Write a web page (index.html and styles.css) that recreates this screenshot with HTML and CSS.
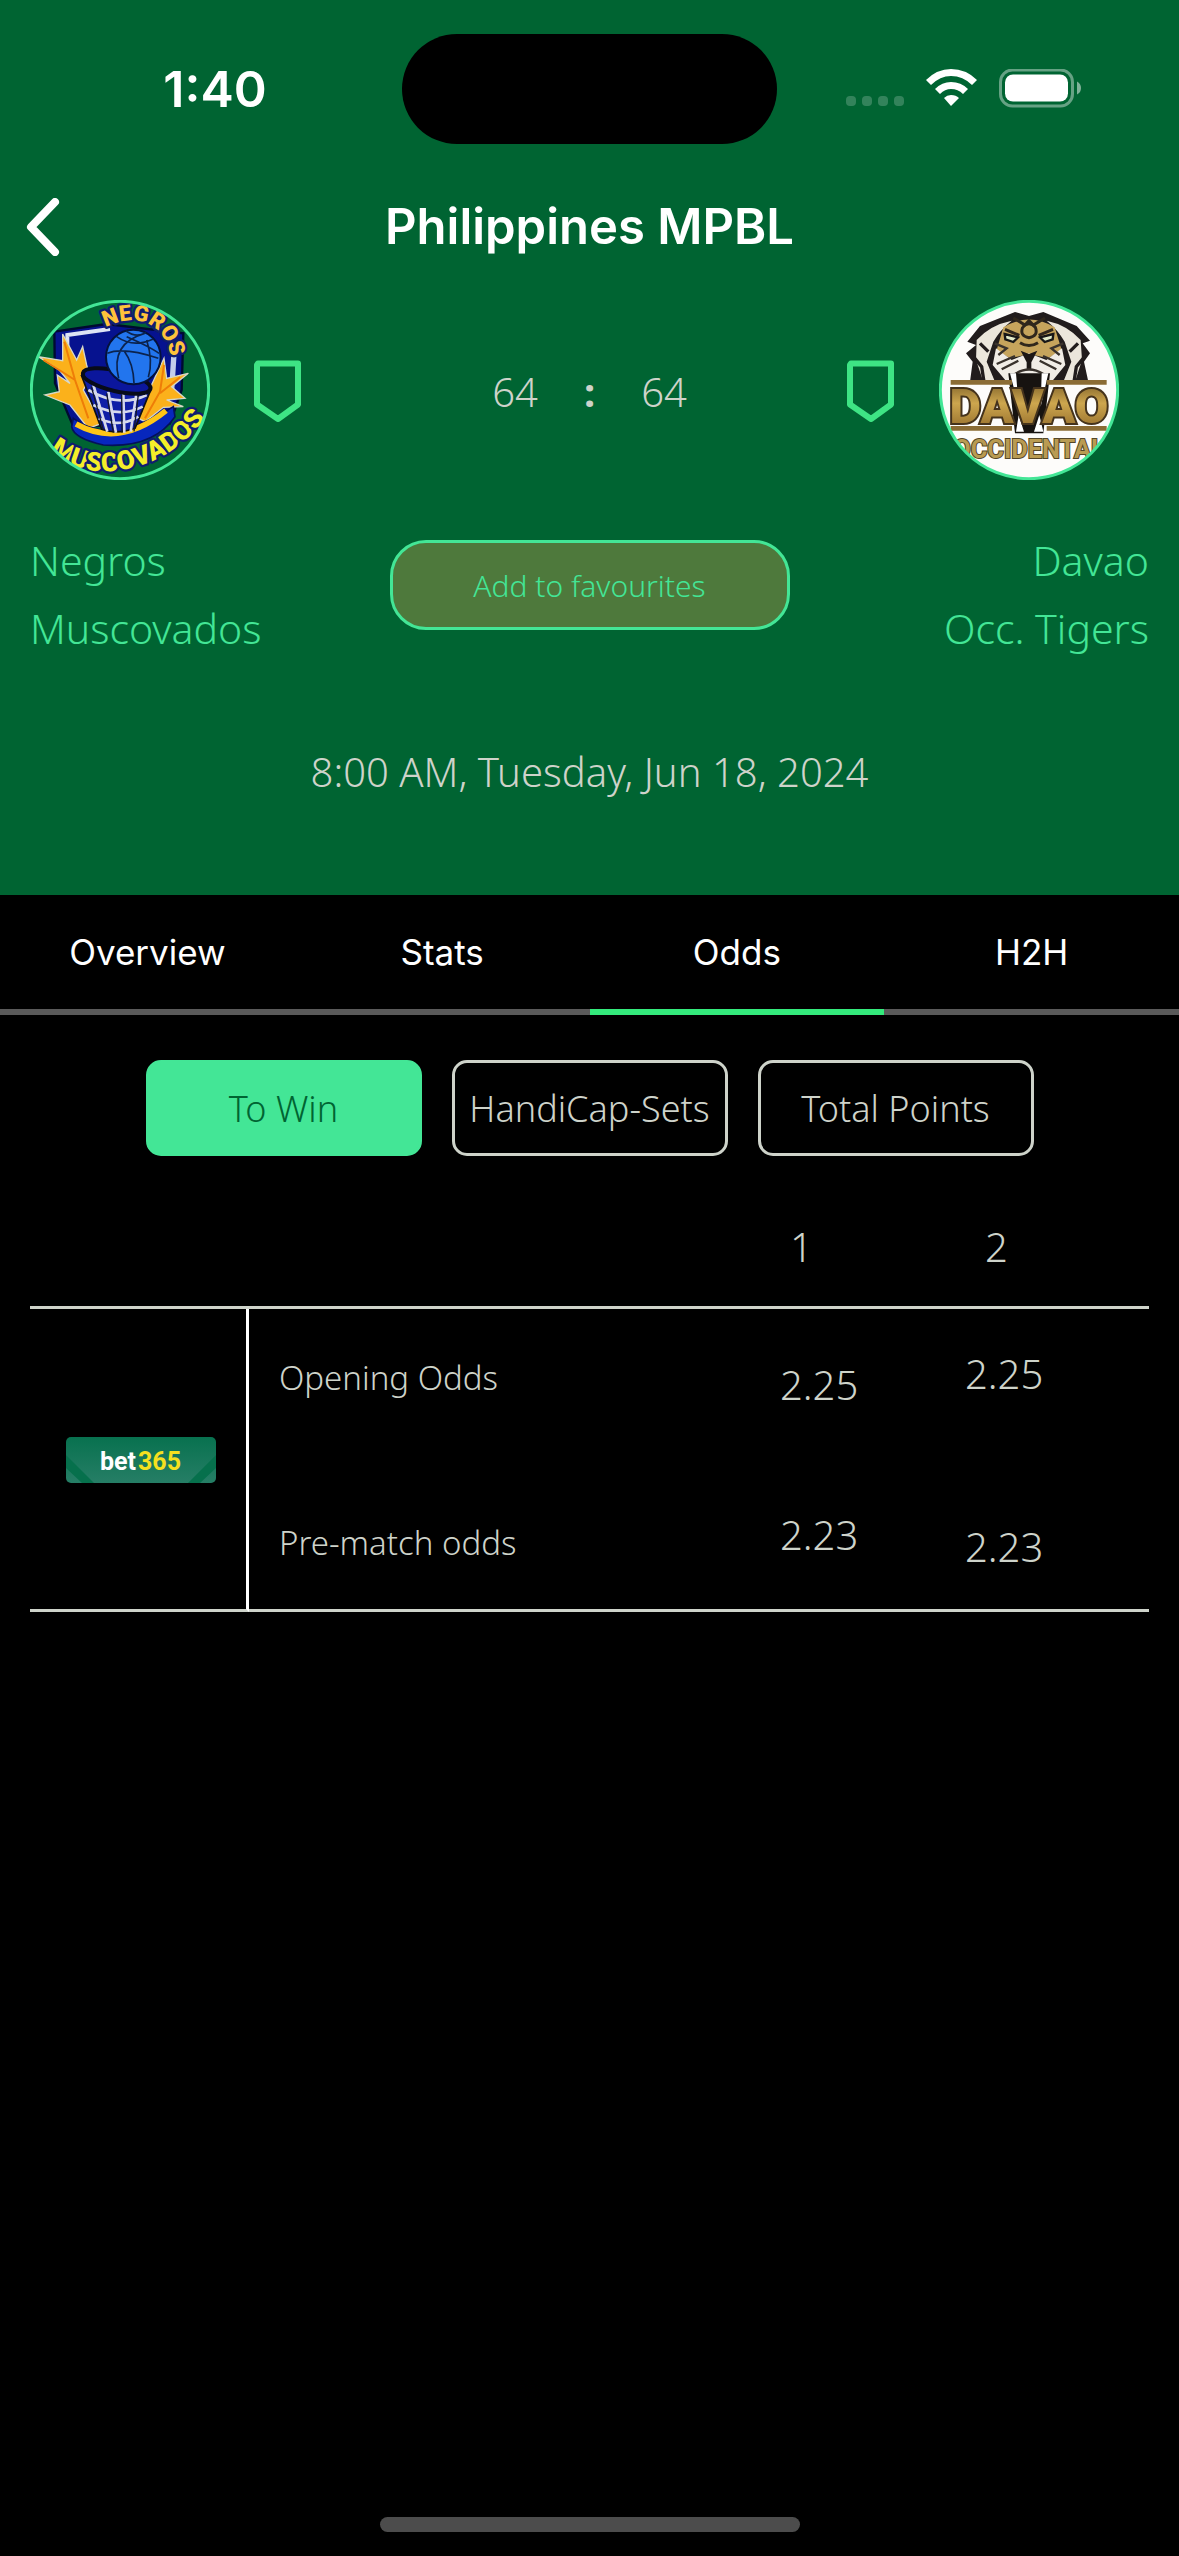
FILE: index.html
```html
<!DOCTYPE html>
<html lang="en">
<head>
<meta charset="utf-8">
<meta name="viewport" content="width=device-width, initial-scale=1">
<title>Philippines MPBL</title>
<link rel="stylesheet" href="styles.css">
</head>
<body>
<div class="app">
  <header class="hero">
    <div class="status">
      <time class="clock">1:40</time>
      <div class="island"></div>
      <svg class="status-icons" viewBox="0 0 236 40" aria-hidden="true">
        <g fill="#fff" opacity=".2"><rect x="0" y="27" width="10" height="10" rx="4"/><rect x="16" y="27" width="10" height="10" rx="4"/><rect x="32" y="27" width="10" height="10" rx="4"/><rect x="48" y="27" width="10" height="10" rx="4"/></g>
        <path fill="#fff" d="M80 11Q91 0 105 0Q120 0 131 11L126 16Q117 7 105 7Q94 7 85 16ZM89 20Q96 13 105 13Q115 13 122 20L117 25Q112 20 105 20Q99 20 94 25ZM98 29Q101 26 105 26Q110 26 113 29L105 37Z"/>
        <rect x="154.500" y="1" width="72" height="36" rx="12" fill="none" stroke="#fff" stroke-width="3" opacity=".4"/>
        <rect x="159" y="5.500" width="63" height="27" rx="8" fill="#fff"/>
        <path d="M231 12.500q4 2 4 6.500t-4 6.500z" fill="#fff" opacity=".5"/>
      </svg>
    </div>
    <nav class="titlebar">
      <button class="back" type="button" aria-label="Back"><svg viewBox="0 0 34 58"><path d="M29 4L5 29L29 54" fill="none" stroke="#fff" stroke-width="8" stroke-linecap="round" stroke-linejoin="round"/></svg></button>
      <h1>Philippines MPBL</h1>
    </nav>
    <section class="match">
      <div class="side">
        <svg class="crest" viewBox="30 30 540 540" role="img" aria-label="Negros Muscovados">
          <defs>
            <clipPath id="round"><circle cx="300" cy="300" r="266"/></clipPath>
            <path id="topArc" d="M257 112Q350 66 412 120Q452 155 462 250"/>
            <path id="bottomArc" d="M88 484Q190 570 335 534Q470 500 560 380"/>
          </defs>
          <g clip-path="url(#round)">
            <path d="M103 125L260 102L490 130L485 300L450 400L160 410L105 280Z" fill="#06128f" stroke="#000a30" stroke-width="7"/>
            <path d="M142 190V135L270 117" fill="none" stroke="#dde3f5" stroke-width="12"/>
            <path d="M462 190L455 300" stroke="#c3cdea" stroke-width="16"/>
            <g fill="#fbb11b" stroke="#d8d8c8" stroke-width="4">
              <path d="M128 132L170 210L188 170L200 225L210 262L190 300L245 400L205 415L150 345L75 315L118 305L112 255L150 280L118 240L55 200L128 212Z"/>
              <path d="M432 205L440 265L505 250L455 290L495 325L440 330L490 350L430 352L375 395L355 385L385 305Z"/>
            </g>
            <path d="M133 155L165 270L205 385M70 210L165 270M432 225L420 305L375 385M480 262L420 310" fill="none" stroke="#ee7d08" stroke-width="6"/>
            <path d="M160 385Q270 470 460 350L465 380Q400 475 250 465Q160 445 155 410Z" fill="#0727bd" stroke="#04105a" stroke-width="5"/>
            <path d="M168 402Q300 475 438 362" fill="none" stroke="#ffc616" stroke-width="17"/>
            <path d="M185 258L245 418Q290 435 345 415L392 300Z" fill="#101fa7" stroke="#111" stroke-width="5"/>
            <path d="M205 300Q300 355 380 315M220 345Q300 385 368 350M236 385Q300 415 355 380M220 285L262 425M265 305L288 428M310 312L313 428M350 305L332 425" fill="none" stroke="#d5d8eb" stroke-width="8"/>
            <path d="M214 290L250 420M260 310L280 428M305 315L306 428M356 305L342 424" fill="none" stroke="#15182a" stroke-width="4"/>
            <ellipse cx="290" cy="273" rx="104" ry="31" transform="rotate(13 290 273)" fill="#0b169c" stroke="#070b1a" stroke-width="12"/>
            <circle cx="340" cy="201" r="82" fill="#2275ee" stroke="#04113c" stroke-width="6"/>
            <path d="M262 190Q310 170 415 205M290 140Q340 175 400 147M318 123Q350 145 378 127M374 130Q270 160 296 265M313 184Q340 220 342 280M380 150Q400 215 385 262M320 140Q390 170 417 190" fill="none" stroke="#0b234e" stroke-width="5"/>
            <g class="crest-text" font-size="66"><text fill="#ffc33a"><textPath href="#topArc">NEGROS</textPath></text></g>
            <g class="crest-text" font-size="79"><text fill="#f4ee29"><textPath href="#bottomArc">MUSCOVADOS</textPath></text></g>
          </g>
          <circle cx="300" cy="300" r="266" fill="none" stroke="#43e696" stroke-width="9"/>
        </svg>
        <svg class="shield" viewBox="0 -2 50 64" aria-hidden="true"><path d="M5 3.500H45V44.500L25 59L4 44.500V5Z" fill="none" stroke="#3ee484" stroke-width="6" stroke-linejoin="round"/></svg>
      </div>
      <div class="score"><span>64</span><b>:</b><span>64</span></div>
      <div class="side side-away">
        <svg class="shield" viewBox="0 -2 50 64" aria-hidden="true"><path d="M5 3.500H45V44.500L25 59L4 44.500V5Z" fill="none" stroke="#3ee484" stroke-width="6" stroke-linejoin="round"/></svg>
        <svg class="crest" viewBox="327 30 540 540" role="img" aria-label="Davao Occidental Tigers">
          <defs>
            <clipPath id="roundAway"><circle cx="597" cy="300" r="266"/></clipPath>
            <linearGradient id="gold" x1="0" y1="0" x2="0" y2="1"><stop offset="0" stop-color="#705523"/><stop offset=".45" stop-color="#cda64e"/><stop offset="1" stop-color="#8b6426"/></linearGradient>
          </defs>
          <g clip-path="url(#roundAway)">
            <rect x="327" y="30" width="540" height="540" fill="#fdfcfa"/>
            <path d="M412 155L450 108L555 66L597 78L640 66L740 108L780 152L758 160L780 190L762 215L775 275H420L428 215L408 190L438 165Z" fill="#211c1c"/>
            <path d="M440 150Q480 105 545 92Q510 120 490 155L470 215L495 275H460L438 210ZM752 150Q712 105 650 92Q684 120 704 155L724 215L700 275H735L756 210Z" fill="#ebe6db"/>
            <path d="M430 200L455 230L462 275M764 200L739 230L732 275M450 160L475 185M744 160L719 185" fill="none" stroke="#211c1c" stroke-width="10"/>
            <path d="M520 112Q597 65 674 112L695 180L655 205L597 192L539 205L500 180Z" fill="#c6a45c"/>
            <path d="M498 175L545 210L597 190L649 210L696 175L706 225L665 275H530L488 225Z" fill="#f1ede6"/>
            <path d="M550 84L585 105L597 92L610 105L645 84M525 118L568 136M669 118L626 136M570 158Q597 175 624 158M578 112Q597 90 616 112Q626 138 597 143Q568 138 578 112" fill="none" stroke="#30271c" stroke-width="9"/>
            <path d="M524 132L564 142L550 156L526 148ZM670 132L630 142L644 156L668 148Z" fill="#e2ebc9" stroke="#171717" stroke-width="7"/>
            <path d="M572 182L597 192L622 182L604 217V240H590V217Z" fill="#1c1715"/>
            <path d="M500 222L555 198M515 238L565 212M694 222L639 198M679 238L629 212M494 160L530 175L505 195M700 160L664 175L689 195M555 252Q597 225 640 252" fill="none" stroke="#39322c" stroke-width="7"/>
            <path d="M535 250H660L640 430H555Z" fill="#171310"/>
            <path d="M540 250H558L566 350ZM635 250H655L632 350ZM558 425L566 375L582 425ZM612 425L628 375L640 425Z" fill="#fff"/>
            <path d="M362 270H546V284H362ZM650 270H830V284H650ZM362 408H546V422H362ZM650 408H830V422H650Z" fill="#8b6c35"/>
            <text class="away-name" x="597" y="398" font-size="146" fill="url(#gold)">DAVAO</text>
            <text class="away-place" x="597" y="505" font-size="76" fill="#b99b52">OCCIDENTAL</text>
          </g>
          <circle cx="597" cy="300" r="266" fill="none" stroke="#43e696" stroke-width="9"/>
        </svg>
      </div>
    </section>
    <section class="teams">
      <h2>Negros<br>Muscovados</h2>
      <button class="favourite" type="button">Add to favourites</button>
      <h2 class="away">Davao<br>Occ. Tigers</h2>
    </section>
    <p class="date">8:00 AM, Tuesday, Jun 18, 2024</p>
  </header>

  <nav class="tabs">
    <a href="#overview">Overview</a>
    <a href="#stats">Stats</a>
    <a href="#odds" class="current" aria-current="page">Odds</a>
    <a href="#h2h">H2H</a>
  </nav>

  <main>
    <div class="markets">
      <button type="button" class="selected">To Win</button>
      <button type="button">HandiCap-Sets</button>
      <button type="button">Total Points</button>
    </div>
    <table class="odds">
      <colgroup><col class="col-book"><col><col class="col-home"><col class="col-away"></colgroup>
      <thead>
        <tr><td></td><td></td><th scope="col" class="home">1</th><th scope="col" class="guest">2</th></tr>
      </thead>
      <tbody>
        <tr class="opening">
          <td class="book" rowspan="2">
            <svg viewBox="0 0 150 46" role="img" aria-label="bet365">
              <defs><linearGradient id="felt" x1="0" y1="0" x2="0" y2="1"><stop offset="0" stop-color="#08714f"/><stop offset="1" stop-color="#267e66"/></linearGradient></defs>
              <rect width="150" height="46" rx="5" fill="url(#felt)"/>
              <path d="M0 18L28 46H16L0 31ZM150 18L122 46H134L150 31Z" fill="#06704c"/>
              <text class="book-name" x="34" y="33" fill="#fff">bet<tspan dx="2" fill="#f5e01f">365</tspan></text>
            </svg>
          </td>
          <th scope="row">Opening Odds</th><td>2.25</td><td class="spread">2.25</td>
        </tr>
        <tr class="prematch">
          <th scope="row">Pre-match odds</th><td>2.23</td><td class="spread">2.23</td>
        </tr>
      </tbody>
    </table>
  </main>
  <footer><div class="home-indicator"></div></footer>
</div>
</body>
</html>
```
FILE: styles.css
```css
* { box-sizing: border-box; }
body {
  margin: 0;
  background: #000;
  color: #ced3ca;
  font-family: "Noto Sans", "Open Sans", sans-serif;
  font-weight: 350;
  font-size: 40px;
}
h1, h2, p { margin: 0; font-weight: inherit; }
button { padding: 0; font: inherit; color: inherit; background: none; border: 0; }
svg { display: block; flex: none; }
.app { min-height: 100vh; display: flex; flex-direction: column; }

.hero { background: #006432; padding: 34px 0 93px; }
.status { display: grid; grid-template-columns: 1fr 375px 1fr; align-items: center; }
.clock {
  padding-left: 28px;
  text-align: center;
  color: #fff;
  font: 600 50px/60px Inter, sans-serif;
}
.island { height: 110px; border-radius: 55px; background: #000; }
.status-icons { width: 236px; height: 40px; justify-self: center; margin-right: 28px; }

.titlebar {
  display: grid;
  grid-template-columns: 60px 1fr 60px;
  align-items: center;
  height: 80px;
  margin: 43px 0 33px;
}
.back { padding-left: 26px; }
.back svg { width: 34px; height: 58px; }
h1 { text-align: center; color: #fff; font: 600 49px/60px Inter, sans-serif; }

.match { display: grid; grid-template-columns: 1fr auto 1fr; align-items: center; padding: 0 30px; }
.side { display: flex; align-items: center; gap: 43px; }
.side-away { justify-content: flex-end; padding-right: 30px; }
.crest { width: 180px; height: 180px; }
.shield { width: 50px; height: 64px; }
.score { display: flex; align-items: center; gap: 46px; padding-top: 2px; }
.score b { font-weight: 700; }
.crest-text { font-family: Roboto, sans-serif; font-weight: 900; stroke: #101d70; stroke-width: 14px; paint-order: stroke; stroke-linejoin: round; }
.away-name { font-family: Roboto, sans-serif; font-weight: 900; text-anchor: middle; stroke: #45331c; stroke-width: 12px; paint-order: stroke; }
.away-place { font-family: Roboto, sans-serif; font-weight: 700; text-anchor: middle; stroke: #544628; stroke-width: 6px; paint-order: stroke; }

.teams {
  display: grid;
  grid-template-columns: 1fr 400px 1fr;
  align-items: start;
  margin-top: 46px;
  padding: 0 30px;
  color: #43e696;
}
h2 { font-size: 41px; line-height: 68px; }
.away { text-align: right; }
.favourite {
  height: 90px;
  margin-top: 14px;
  border: 3px solid #43e696;
  border-radius: 36px;
  background: #4e793c;
  font-size: 30px;
}
.date { margin-top: 80px; text-align: center; line-height: 60px; }

.tabs { display: grid; grid-template-columns: repeat(4, 1fr); }
.tabs a {
  border-bottom: 6px solid #5a5a5a;
  color: #fff;
  font: 400 35px/114px Inter, sans-serif;
  text-align: center;
  text-decoration: none;
}
.tabs .current { border-color: #34ea7c; }

main { padding: 45px 30px 0; }
.markets { display: grid; grid-template-columns: repeat(3, 276px); justify-content: center; gap: 30px; }
.markets button { height: 96px; border: 3px solid #ced3ca; border-radius: 15px; font-size: 36px; }
.markets .selected { border-color: #43e696; background: #43e696; color: #006432; }

.odds {
  width: 100%;
  margin-top: 30px;
  border-collapse: separate;
  border-spacing: 0;
  table-layout: fixed;
  text-align: left;
}
.odds td, .odds th { padding: 0; font-weight: inherit; line-height: 54px; }
.col-book { width: 219px; }
.col-home { width: 185px; }
.col-away { width: 184px; }
.odds thead td, .odds thead th { height: 123px; padding-top: 2px; border-bottom: 3px solid #ced3ca; }
.odds .home { padding-left: 10px; }
.odds .guest { padding-left: 20px; }
.opening { height: 150px; }
.prematch { height: 153px; }
.odds .book { border-right: 3px solid #fff; padding-left: 36px; }
.odds .book, .odds .prematch th, .odds .prematch td { border-bottom: 3px solid #ced3ca; }
.odds tbody th { padding-left: 30px; font-size: 33px; }
.odds .opening td { padding-top: 2px; }
.odds .opening th { padding-bottom: 12px; }
.odds .opening .spread { padding: 0 0 20px; }
.odds .prematch td { padding-top: 2px; }
.odds .prematch th { padding-top: 18px; }
.odds .prematch .spread { padding-top: 26px; }
.book svg { width: 150px; height: 46px; }
.book-name { font: 700 25px Roboto, sans-serif; }

footer { margin-top: auto; padding: 24px; }
.home-indicator { width: 420px; height: 15px; margin: 0 auto; border-radius: 8px; background: #4c4c4c; }
```
